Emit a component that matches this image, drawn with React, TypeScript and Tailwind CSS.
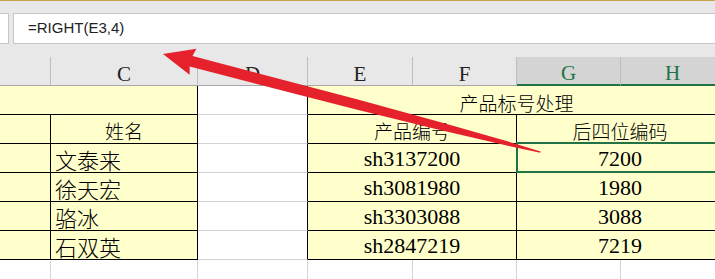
import React from "react";

const names = ["文泰来", "徐天宏", "骆冰", "石双英"];
const codes = ["sh3137200", "sh3081980", "sh3303088", "sh2847219"];
const last4 = ["7200", "1980", "3088", "7219"];

export default function App() {
  return (
    <div className="relative w-[715px] h-[279px] overflow-hidden bg-[#e8e8e8] font-['Liberation_Serif','Noto_Sans_CJK_SC',serif] text-black">
      {/* top accent */}
      <div className="h-[1px] bg-[#c9a449]" />
      <div className="h-[12px]" />
      {/* formula bar */}
      <div className="flex h-[31px]">
        <div className="w-[9px] bg-white border-y border-r border-[#c6c6c6]" />
        <div className="ml-[4px] flex-1 bg-white border-y border-l border-[#c6c6c6] flex items-center pl-[14px] text-[15px] font-['Liberation_Sans',sans-serif] text-[#222]">
          =RIGHT(E3,4)
        </div>
      </div>
      <div className="h-[13px]" />

      {/* sheet grid */}
      <div className="grid w-[725px] grid-cols-[51px_147px_110px_105px_104px_104px_104px] grid-rows-[29px_29px_29px_29px_29px_29px_29px_29px]">
        {/* column headers */}
        <div className="border-r border-b border-r-[#bdbdbd] border-b-[#a8a8a8]" />
        {["C", "D", "E", "F"].map((l) => (
          <div
            key={l}
            className="flex items-center justify-center pt-[6px] text-[21px] leading-none text-[#222] border-r border-b border-r-[#bdbdbd] border-b-[#a8a8a8]"
          >
            {l}
          </div>
        ))}
        {["G", "H"].map((l) => (
          <div
            key={l}
            className="flex items-center justify-center pt-[6px] text-[21px] leading-none text-[#217346] bg-[#d4d4d4] border-r border-r-[#bdbdbd] border-b-2 border-b-[#217346]"
          >
            {l}
          </div>
        ))}

        {/* row 1 */}
        <div className="col-span-2 bg-[#ffffcc] border-r border-b border-black" />
        <div className="bg-white border-r border-r-black border-b border-b-[#d4d4d4]" />
        <div className="col-span-4 bg-[#ffffcc] border-b border-black flex items-end justify-center pb-[2px] text-[19px] leading-none font-['Noto_Sans_CJK_SC',sans-serif] font-light">
          产品标号处理
        </div>

        {/* row 2 */}
        <div className="bg-[#ffffcc] border-r border-b border-black" />
        <div className="bg-[#ffffcc] border-r border-b border-black flex items-end justify-center pb-[3px] text-[19px] leading-none font-['Noto_Sans_CJK_SC',sans-serif] font-light">
          姓名
        </div>
        <div className="bg-white border-r border-r-black border-b border-b-[#d4d4d4]" />
        <div className="col-span-2 bg-[#ffffcc] border-r border-b border-black flex items-end justify-center pb-[3px] text-[19px] leading-none font-['Noto_Sans_CJK_SC',sans-serif] font-light">
          产品编号
        </div>
        <div className="col-span-2 bg-[#ffffcc] border-b border-black flex items-end justify-center pb-[3px] text-[19px] leading-none font-['Noto_Sans_CJK_SC',sans-serif] font-light">
          <span className="relative left-[-1px]">后四位编码</span>
        </div>

        {/* data rows */}
        {names.map((n, i) => (
          <React.Fragment key={n}>
            <div className="bg-[#ffffcc] border-r border-b border-black" />
            <div className="bg-[#ffffcc] border-r border-b border-black flex items-end pl-[4px] pb-[2px] text-[22px] leading-none font-['Noto_Sans_CJK_SC',sans-serif] font-light">
              {n}
            </div>
            <div className="bg-white border-r border-r-black border-b border-b-[#d4d4d4]" />
            <div className="col-span-2 bg-[#ffffcc] border-r border-b border-black flex items-end justify-center pb-[2px] text-[22px] leading-none">
              {codes[i]}
            </div>
            <div className="relative col-span-2 bg-[#ffffcc] border-b border-black flex items-end justify-center pb-[2px] text-[22px] leading-none">
              <span className="relative left-[-1px]">{last4[i]}</span>
              {i === 0 && (
                <div className="absolute top-[-2px] left-[-1px] right-[-2px] bottom-[-1px] border-2 border-[#217346]" />
              )}
            </div>
          </React.Fragment>
        ))}

        {/* empty row */}
        {["b", "c", "d", "e", "f", "g", "h"].map((k) => (
          <div key={k} className="bg-white border-r border-b border-[#d4d4d4]" />
        ))}
      </div>

      {/* annotation arrow */}
      <svg
        className="absolute left-0 top-0 pointer-events-none"
        width="715"
        height="279"
        viewBox="0 0 715 279"
      >
        <g transform="translate(163 54) rotate(14.57)">
          <path
            d="M0 0 L31 -13.5 L29 -5.5 L200 -5 L285 -3.9 L360 -2 L390 -0.6 L390 0.6 L360 2 L285 3.9 L200 5 L29 5.5 L31 13.5 Z"
            fill="#e5212b"
          />
        </g>
      </svg>
    </div>
  );
}
